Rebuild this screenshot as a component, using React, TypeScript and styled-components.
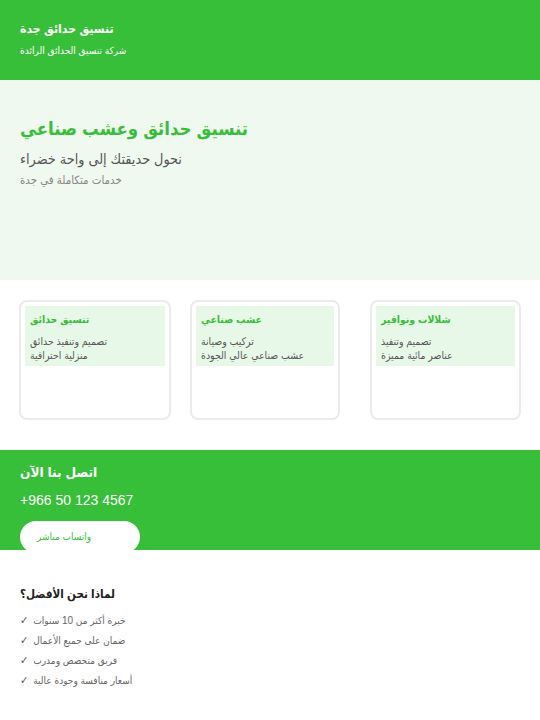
import React from "react";
import styled, { createGlobalStyle } from "styled-components";

const Global = createGlobalStyle`
  html, body { margin: 0; padding: 0; background: #ffffff; }
  body { font-family: "Liberation Sans", "DejaVu Sans Condensed", "DejaVu Sans", sans-serif; }
  * { box-sizing: border-box; }
`;

const Page = styled.div`
  width: 540px;
  display: flex;
  flex-direction: column;
`;

const Header = styled.header`
  background: #38bf3a;
  height: 80px;
  padding: 20px 20px 0;
  color: #ffffff;
`;

const BrandTitle = styled.h1`
  margin: 0;
  font-size: 12.2px;
  font-weight: bold;
  line-height: 18px;
`;

const BrandSub = styled.p`
  margin: 6px 0 0;
  font-size: 10px;
  line-height: 14px;
`;

const Hero = styled.section`
  background: #f0f9f0;
  height: 200px;
  padding: 35px 20px 0;
`;

const HeroTitle = styled.h2`
  margin: 0;
  font-size: 18.4px;
  font-weight: bold;
  color: #38bf3a;
  line-height: 28px;
`;

const HeroSub = styled.p`
  margin: 7px 0 0;
  font-size: 14.3px;
  color: #555555;
  line-height: 18px;
`;

const HeroNote = styled.p`
  margin: 4px 0 0;
  font-size: 11.4px;
  color: #888888;
  line-height: 16px;
`;

const Services = styled.section`
  height: 170px;
  padding: 20px 19px 0;
  display: flex;
  align-items: flex-start;
`;

const Card = styled.div<{ $w: number; $ml: number }>`
  width: ${(p) => p.$w}px;
  margin-left: ${(p) => p.$ml}px;
  height: 120px;
  border: 2px solid #ebebeb;
  border-radius: 8px;
  padding: 4px;
  background: #ffffff;
`;

const CardInner = styled.div`
  background: #e8f8e8;
  height: 60px;
  padding: 6px 5px 0;
`;

const CardTitle = styled.h3`
  margin: 0;
  font-size: 10.4px;
  font-weight: bold;
  color: #38bf3a;
  line-height: 16px;
`;

const CardText = styled.p`
  margin: 7px 0 0;
  font-size: 10.4px;
  color: #555555;
  line-height: 14px;
`;

const Contact = styled.section`
  background: #38bf3a;
  height: 100px;
  padding: 14px 20px 0;
  color: #ffffff;
  overflow: hidden;
`;

const ContactTitle = styled.h2`
  margin: 0;
  font-size: 13.6px;
  font-weight: bold;
  line-height: 18px;
`;

const Phone = styled.div`
  margin-top: 9px;
  font-size: 14px;
  line-height: 18px;
`;

const WhatsButton = styled.button`
  margin-top: 12px;
  width: 120px;
  height: 32px;
  border: none;
  border-radius: 16px;
  background: #ffffff;
  color: #38bf3a;
  font-family: inherit;
  font-size: 10px;
  text-align: left;
  padding: 0 0 2px 17px;
  cursor: pointer;
`;

const Why = styled.section`
  padding: 35px 20px 20px;
`;

const WhyTitle = styled.h2`
  margin: 0 0 8px;
  font-size: 11.6px;
  font-weight: bold;
  color: #222222;
  line-height: 18px;
`;

const List = styled.ul`
  list-style: none;
  margin: 0;
  padding: 0;
  display: flex;
  flex-direction: column;
`;

const Item = styled.li`
  height: 20px;
  font-size: 10px;
  color: #666666;
  line-height: 20px;
`;

const Check = styled.span`
  display: inline-block;
  font-size: 11px;
  line-height: 1;
  color: #555555;
  margin-right: 5px;
`;

const cards = [
  { title: "تنسيق حدائق", lines: ["تصميم وتنفيذ حدائق", "منزلية احترافية"], w: 152, ml: 0 },
  { title: "عشب صناعي", lines: ["تركيب وصيانة", "عشب صناعي عالي الجودة"], w: 150, ml: 19 },
  { title: "شلالات ونوافير", lines: ["تصميم وتنفيذ", "عناصر مائية مميزة"], w: 151, ml: 30 },
];

const reasons = [
  "خبرة أكثر من 10 سنوات",
  "ضمان على جميع الأعمال",
  "فريق متخصص ومدرب",
  "أسعار منافسة وجودة عالية",
];

export default function App() {
  return (
    <Page>
      <Global />
      <Header>
        <BrandTitle>تنسيق حدائق جدة</BrandTitle>
        <BrandSub>شركة تنسيق الحدائق الرائدة</BrandSub>
      </Header>
      <Hero>
        <HeroTitle>تنسيق حدائق وعشب صناعي</HeroTitle>
        <HeroSub>نحول حديقتك إلى واحة خضراء</HeroSub>
        <HeroNote>خدمات متكاملة في جدة</HeroNote>
      </Hero>
      <Services>
        {cards.map((c) => (
          <Card key={c.title} $w={c.w} $ml={c.ml}>
            <CardInner>
              <CardTitle>{c.title}</CardTitle>
              <CardText>
                {c.lines[0]}
                <br />
                {c.lines[1]}
              </CardText>
            </CardInner>
          </Card>
        ))}
      </Services>
      <Contact>
        <ContactTitle>اتصل بنا الآن</ContactTitle>
        <Phone>+966 50 123 4567</Phone>
        <WhatsButton>واتساب مباشر</WhatsButton>
      </Contact>
      <Why>
        <WhyTitle>لماذا نحن الأفضل؟</WhyTitle>
        <List>
          {reasons.map((r) => (
            <Item key={r}>
              <Check>✓</Check>
              {r}
            </Item>
          ))}
        </List>
      </Why>
    </Page>
  );
}
